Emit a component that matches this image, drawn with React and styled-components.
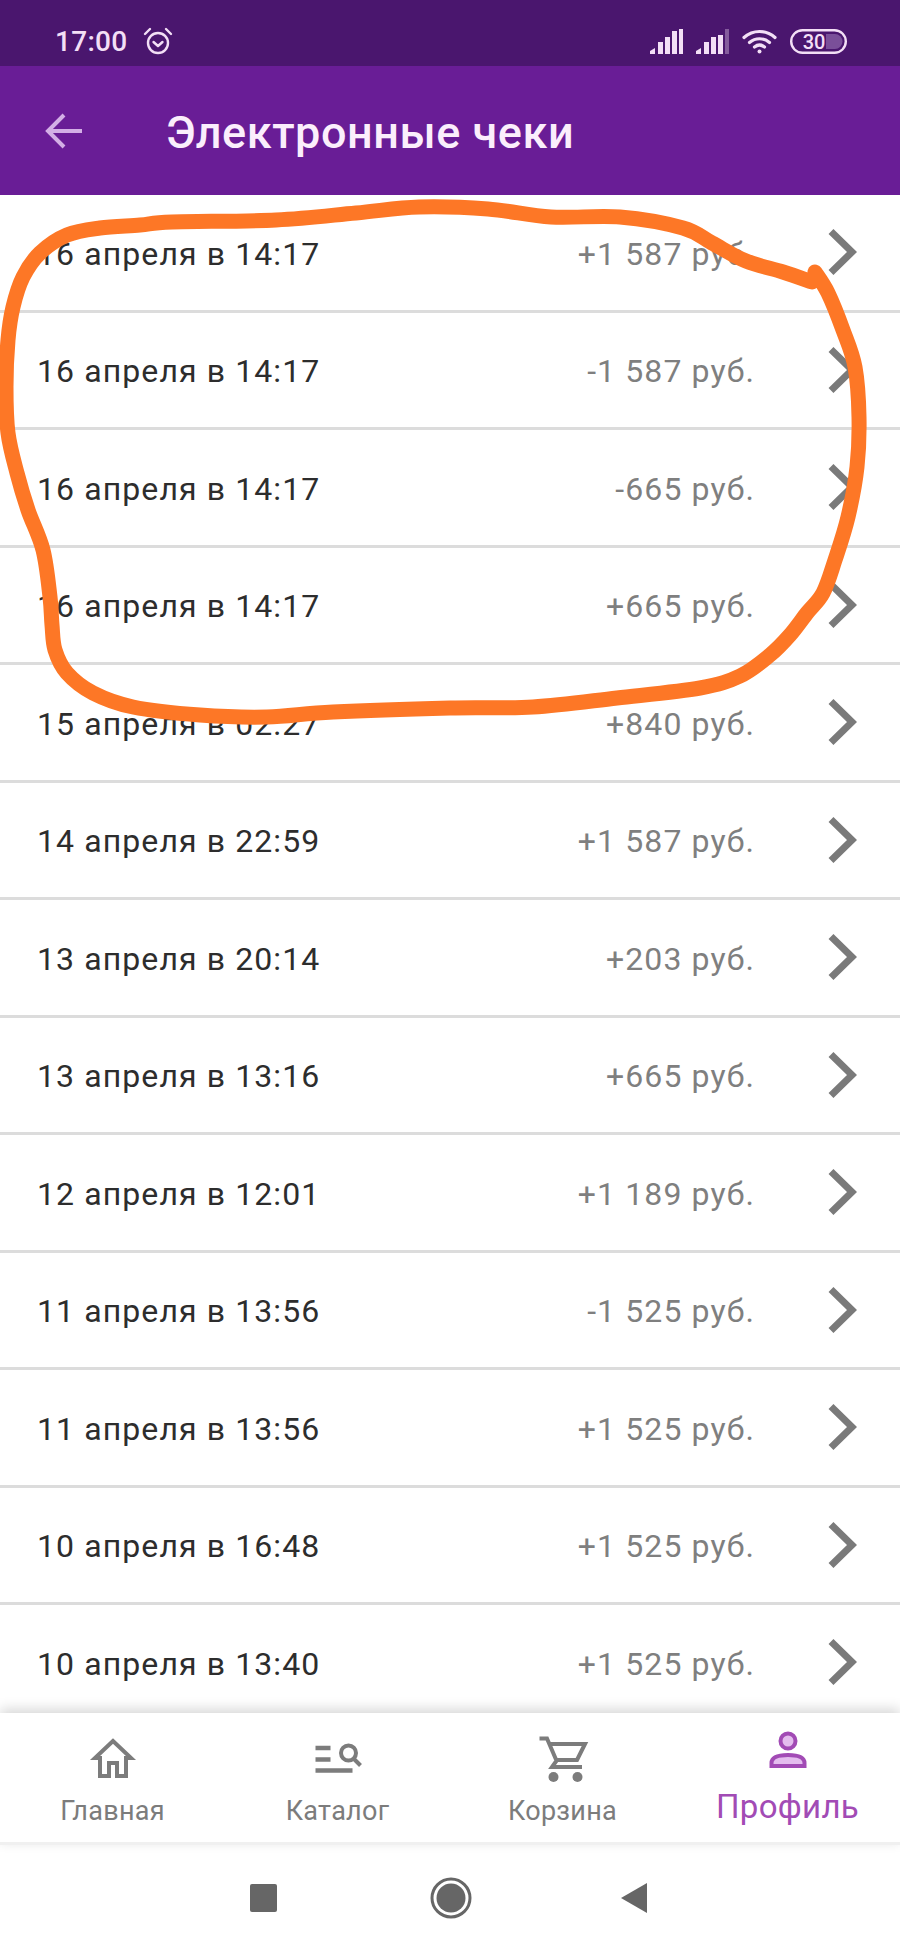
import React from "react";
import styled, { createGlobalStyle } from "styled-components";

const Global = createGlobalStyle`
  html, body { margin: 0; padding: 0; background: #fff; }
  * { box-sizing: border-box; }
`;

const Screen = styled.div`
  position: relative;
  width: 900px;
  height: 1950px;
  overflow: hidden;
  display: flex;
  flex-direction: column;
  background: #fff;
  font-family: Roboto, "Noto Sans", sans-serif;
`;

const StatusBar = styled.div`
  height: 66px;
  flex: none;
  background: #4a166e;
  color: #f3dff6;
  display: flex;
  align-items: center;
  justify-content: space-between;
  padding: 16px 53px 0 55px;
`;
const StatusGroup = styled.div`
  display: flex;
  align-items: center;
  gap: ${(p) => p.$gap}px;
`;
const Clock = styled.span`
  font-size: 28px;
  font-weight: 500;
  letter-spacing: 0.3px;
`;

const Header = styled.header`
  height: 129px;
  flex: none;
  background: #691d96;
  display: flex;
  align-items: center;
  padding-left: 45px;
  position: relative;
  z-index: 1;
`;
const Title = styled.h1`
  margin: 4px 0 0 83px;
  color: #fbeefc;
  font-size: 45px;
  font-weight: 500;
  letter-spacing: 0.55px;
  line-height: 56px;
`;

const List = styled.main`
  flex: 1 1 0;
  min-height: 0;
  overflow: hidden;
`;
const Row = styled.div`
  height: 117.5px;
  border-bottom: 3px solid #dcdcdc;
  display: flex;
  align-items: center;
  padding: 3px 43px 0 37px;
`;
const RowDate = styled.span`
  flex: 1;
  color: #2d2d2d;
  font-size: 32px;
  line-height: 40px;
  letter-spacing: 1.1px;
`;
const Amount = styled.span`
  color: #7f7f7f;
  font-size: 32px;
  line-height: 40px;
  letter-spacing: 1.1px;
  margin-right: 73px;
`;

const BottomNav = styled.nav`
  height: 132px;
  flex: none;
  background: #fff;
  border-bottom: 3px solid #f0f0f0;
  box-shadow: 0 -4px 12px rgba(0, 0, 0, 0.16);
  display: grid;
  grid-template-columns: repeat(4, 225px);
  position: relative;
`;
const NavItem = styled.div`
  display: flex;
  flex-direction: column;
  align-items: center;
  padding-top: 13px;
  color: ${(p) => (p.$active ? "#a24bb5" : "#7c7c7c")};
`;
const NavLabel = styled.span`
  font-size: ${(p) => (p.$active ? 33 : 27)}px;
  line-height: 36px;
  margin-top: ${(p) => (p.$active ? 3 : 7)}px;
  letter-spacing: 0.3px;
`;

const SystemBar = styled.div`
  height: 105px;
  flex: none;
  display: flex;
  align-items: center;
  padding-left: 250px;
`;
const SystemGlyph = styled.svg`
  display: block;
  margin-left: ${(p) => p.$gap || 0}px;
  fill: #666;
`;

const Scribble = styled.svg`
  position: absolute;
  inset: 0;
  pointer-events: none;
  z-index: 2;
`;

const rows = [
  ["16 апреля в 14:17", "+1 587 руб."],
  ["16 апреля в 14:17", "-1 587 руб."],
  ["16 апреля в 14:17", "-665 руб."],
  ["16 апреля в 14:17", "+665 руб."],
  ["15 апреля в 02:27", "+840 руб."],
  ["14 апреля в 22:59", "+1 587 руб."],
  ["13 апреля в 20:14", "+203 руб."],
  ["13 апреля в 13:16", "+665 руб."],
  ["12 апреля в 12:01", "+1 189 руб."],
  ["11 апреля в 13:56", "-1 525 руб."],
  ["11 апреля в 13:56", "+1 525 руб."],
  ["10 апреля в 16:48", "+1 525 руб."],
  ["10 апреля в 13:40", "+1 525 руб."],
];

const pts = [
  [812, 282], [783, 272], [746, 261], [712, 243], [683, 228], [620, 217], [551, 217], [488, 209], [419, 207],
  [356, 213], [276, 220], [172, 222], [140, 225], [100, 228], [67, 235], [40, 253], [23, 277], [13, 307],
  [8, 340], [6, 387], [8, 433], [17, 473], [28, 510], [43, 550], [50, 597], [52, 625], [55, 650], [67, 673],
  [93, 693], [133, 707], [200, 715], [267, 717], [333, 712], [450, 708], [533, 707], [617, 698], [700, 688],
  [740, 676], [770, 655], [790, 635], [807, 613], [823, 593], [835, 560], [848, 517], [857, 467], [859, 417],
  [855, 367], [843, 330], [828, 293], [815, 272],
];
const smooth = (p) => {
  let d = `M${p[0][0]} ${p[0][1]}`;
  for (let i = 0; i < p.length - 1; i++) {
    const a = p[Math.max(i - 1, 0)], b = p[i], c = p[i + 1], e = p[Math.min(i + 2, p.length - 1)];
    d += ` C${b[0] + (c[0] - a[0]) / 6} ${b[1] + (c[1] - a[1]) / 6} ${c[0] - (e[0] - b[0]) / 6} ${c[1] - (e[1] - b[1]) / 6} ${c[0]} ${c[1]}`;
  }
  return d;
};

const Alarm = () => (
  <svg width="30" height="28" viewBox="0 0 30 28" fill="none" stroke="#f3dff6" strokeWidth="2.4" strokeLinecap="round" strokeLinejoin="round">
    <circle cx="15" cy="16" r="10" />
    <path d="M10.5 15l4.5 4 4.5-4" />
    <path d="M2 7l5-5M28 7l-5-5" />
  </svg>
);
const Signal = ({ dim }) => (
  <svg width="33" height="25" viewBox="0 0 33 25" fill="#f3dff6">
    <path d="M0 25v-3l5-3v6z" />
    <rect x="8" y="13" width="5" height="12" />
    <rect x="15" y="8" width="5" height="17" />
    <rect x="22" y={dim ? 6 : 2} width="5" height={dim ? 19 : 23} />
    <rect x="29" y="0" width="4" height="25" opacity={dim ? 0.35 : 1} />
  </svg>
);
const Wifi = () => (
  <svg width="35" height="25" viewBox="0 0 35 25" fill="none" stroke="#f3dff6" strokeWidth="3.2" strokeLinecap="round">
    <path d="M2 8.5C11 .5 24 .5 33 8.5" />
    <path d="M7.5 13.5c6-5 14-5 20 0" />
    <path d="M12.5 18c3-2.4 7-2.4 10 0" />
    <circle cx="17.5" cy="22.5" r="2" fill="#f3dff6" stroke="none" />
  </svg>
);
const Battery = () => (
  <svg width="57" height="25" viewBox="0 0 57 25">
    <rect x="1.2" y="1.2" width="54.6" height="22.6" rx="11.3" fill="none" stroke="#f3dff6" strokeWidth="2.4" />
    <path d="M36 5h9a7.5 7.5 0 0 1 0 15h-9z" fill="#7a4f99" />
    <text x="24" y="19.5" textAnchor="middle" fontFamily="Roboto, sans-serif" fontSize="20" fontWeight="500" fill="#f3dff6">30</text>
  </svg>
);
const Chevron = () => (
  <svg width="29" height="46" viewBox="0 0 29 46" fill="none" stroke="#7a7a7a" strokeWidth="7" style={{ flex: "none", marginTop: "-3px" }}>
    <path d="M3 2.5L24 23 3 43.5" />
  </svg>
);
const Back = () => (
  <svg width="38" height="36" viewBox="0 0 38 36" fill="none" stroke="#d3afe6" strokeWidth="4">
    <path d="M19 2L3 18l16 16M3 18h34" />
  </svg>
);
const NavIcon = ({ children }) => (
  <svg width="60" height="60" viewBox="0 0 60 60" fill="none" stroke="#7c7c7c" strokeWidth="4" style={{ flex: "none", display: "block" }}>
    {children}
  </svg>
);

export default function App() {
  return (
    <Screen>
      <Global />
      <StatusBar>
        <StatusGroup $gap={15}>
          <Clock>17:00</Clock>
          <Alarm />
        </StatusGroup>
        <StatusGroup $gap={13}>
          <Signal />
          <Signal dim />
          <Wifi />
          <Battery />
        </StatusGroup>
      </StatusBar>
      <Header>
        <Back />
        <Title>Электронные чеки</Title>
      </Header>
      <List>
        {rows.map(([d, a], i) => (
          <Row key={i}>
            <RowDate>{d}</RowDate>
            <Amount>{a}</Amount>
            <Chevron />
          </Row>
        ))}
      </List>
      <BottomNav>
        <NavItem>
          <NavIcon>
            <path d="M30 15L12 32h5v18h9V37h8v13h9V32h5z" />
          </NavIcon>
          <NavLabel>Главная</NavLabel>
        </NavItem>
        <NavItem>
          <NavIcon>
            <path d="M7.5 22h15M7.5 33.5h15M7.5 44.5h37" strokeWidth="4.6" />
            <circle cx="40.5" cy="27" r="7.5" />
            <path d="M46 33l6.5 6.5" />
          </NavIcon>
          <NavLabel>Каталог</NavLabel>
        </NavItem>
        <NavItem>
          <NavIcon>
            <path d="M6.5 12.5H14l9 21" />
            <path d="M17 18h35l-8 16H24l-5 7h30" />
            <circle cx="20.5" cy="51" r="5" fill="#7c7c7c" stroke="none" />
            <circle cx="44.5" cy="51" r="5" fill="#7c7c7c" stroke="none" />
          </NavIcon>
          <NavLabel>Корзина</NavLabel>
        </NavItem>
        <NavItem $active>
          <NavIcon>
            <g stroke="#a24bb5" fill="#e4bdee">
              <circle cx="30" cy="15" r="7.5" />
              <path d="M13.5 40v-3c0-7 10.5-8 16.5-8s16.5 1 16.5 8v3z" />
            </g>
          </NavIcon>
          <NavLabel $active>Профиль</NavLabel>
        </NavItem>
      </BottomNav>
      <SystemBar>
        <SystemGlyph width="27" height="28" viewBox="0 0 27 28">
          <rect width="27" height="28" rx="2" />
        </SystemGlyph>
        <SystemGlyph $gap={153} width="42" height="42" viewBox="0 0 42 42">
          <circle cx="21" cy="21" r="14.5" />
          <circle cx="21" cy="21" r="19" fill="none" stroke="#666" strokeWidth="3" />
        </SystemGlyph>
        <SystemGlyph $gap={149} width="26" height="30" viewBox="0 0 26 30">
          <path d="M26 0v30L0 15z" />
        </SystemGlyph>
      </SystemBar>
      <Scribble width="900" height="1950" viewBox="0 0 900 1950">
        <path d={smooth(pts)} fill="none" stroke="#fd7726" strokeWidth="15" strokeLinecap="round" strokeLinejoin="round" />
      </Scribble>
    </Screen>
  );
}
